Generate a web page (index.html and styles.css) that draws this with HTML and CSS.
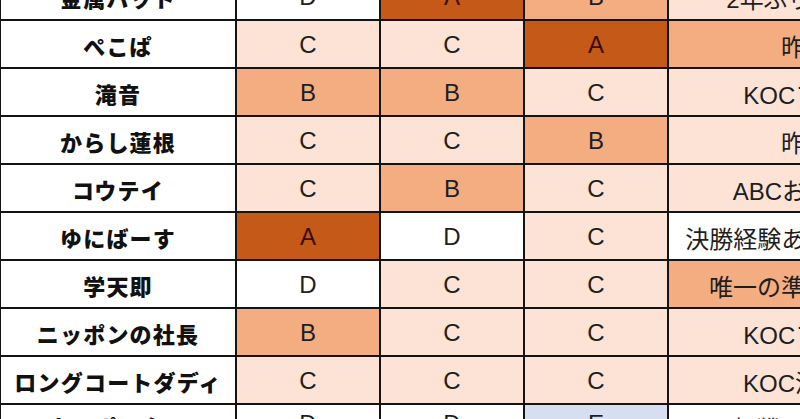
FILE: index.html
```html
<!DOCTYPE html>
<html lang="ja">
<head>
<meta charset="utf-8">
<title>予想表</title>
<link rel="stylesheet" href="styles.css">
</head>
<body>
<div class="sheet">
  <div class="cell name">金属バット</div>
  <div class="cell grade lv-d">D</div>
  <div class="cell grade lv-a">A</div>
  <div class="cell grade lv-b">B</div>
  <div class="cell note lv-c">2年ぶりの準決勝で勢いがある</div>

  <div class="cell name">ぺこぱ</div>
  <div class="cell grade lv-c">C</div>
  <div class="cell grade lv-c">C</div>
  <div class="cell grade lv-a">A</div>
  <div class="cell note lv-b">昨年準々決勝敗退組</div>

  <div class="cell name">滝音</div>
  <div class="cell grade lv-b">B</div>
  <div class="cell grade lv-b">B</div>
  <div class="cell grade lv-c">C</div>
  <div class="cell note lv-c">KOCファイナリスト実力派</div>

  <div class="cell name">からし蓮根</div>
  <div class="cell grade lv-c">C</div>
  <div class="cell grade lv-c">C</div>
  <div class="cell grade lv-b">B</div>
  <div class="cell note lv-c">昨年の準決勝進出組</div>

  <div class="cell name">コウテイ</div>
  <div class="cell grade lv-c">C</div>
  <div class="cell grade lv-b">B</div>
  <div class="cell grade lv-c">C</div>
  <div class="cell note lv-c">ABCお笑いグランプリ優勝者</div>

  <div class="cell name">ゆにばーす</div>
  <div class="cell grade lv-a">A</div>
  <div class="cell grade lv-d">D</div>
  <div class="cell grade lv-c">C</div>
  <div class="cell note lv-d">決勝経験ありで今年が最後のチャンス</div>

  <div class="cell name">学天即</div>
  <div class="cell grade lv-d">D</div>
  <div class="cell grade lv-c">C</div>
  <div class="cell grade lv-c">C</div>
  <div class="cell note lv-b">唯一の準決勝初進出コンビで注目</div>

  <div class="cell name">ニッポンの社長</div>
  <div class="cell grade lv-b">B</div>
  <div class="cell grade lv-c">C</div>
  <div class="cell grade lv-c">C</div>
  <div class="cell note lv-c">KOCファイナリストで話題</div>

  <div class="cell name">ロングコートダディ</div>
  <div class="cell grade lv-c">C</div>
  <div class="cell grade lv-c">C</div>
  <div class="cell grade lv-c">C</div>
  <div class="cell note lv-c">KOC決勝進出の若手実力派</div>

  <div class="cell name last">カベポスター</div>
  <div class="cell grade lv-d last">D</div>
  <div class="cell grade lv-d last">D</div>
  <div class="cell grade lv-e last">E</div>
  <div class="cell note lv-d last">初戦で敗退する可能性もあり</div>
</div>
</body>
</html>
```

FILE: styles.css
```css
html, body {
  margin: 0;
  padding: 0;
  background: #ffffff;
  overflow: hidden;
}

body {
  width: 800px;
  height: 419px;
}

.sheet {
  display: grid;
  grid-template-columns: 234px 142px 142px 142px 440px;
  grid-auto-rows: 46px;
  gap: 2px;
  padding: 2px;
  background: #141414;
  width: max-content;
  margin: -29px 0 0 -1px;
}

.cell {
  display: flex;
  align-items: center;
  justify-content: center;
  white-space: nowrap;
  overflow: hidden;
  background: #ffffff;
  color: #1e1e1e;
  padding-top: 2px;
  box-sizing: border-box;
}

.cell.last {
  align-items: flex-start;
  padding-top: 5px;
}

.name {
  font-family: "Noto Sans CJK JP", sans-serif;
  font-weight: 900;
  font-size: 22px;
  letter-spacing: 1.2px;
  color: #111111;
}

.grade {
  font-family: "Liberation Sans", "Noto Sans CJK JP", sans-serif;
  font-size: 24px;
}

.note {
  font-family: "Liberation Sans", "Noto Sans CJK JP", sans-serif;
  font-weight: 400;
  font-size: 24px;
}

.lv-a {
  background: #c55a18;
  color: #3a0c04;
}

.lv-b {
  background: #f3ad80;
}

.lv-c {
  background: #fce3d5;
}

.lv-d {
  background: #ffffff;
}

.lv-e {
  background: #d6def0;
}
```
